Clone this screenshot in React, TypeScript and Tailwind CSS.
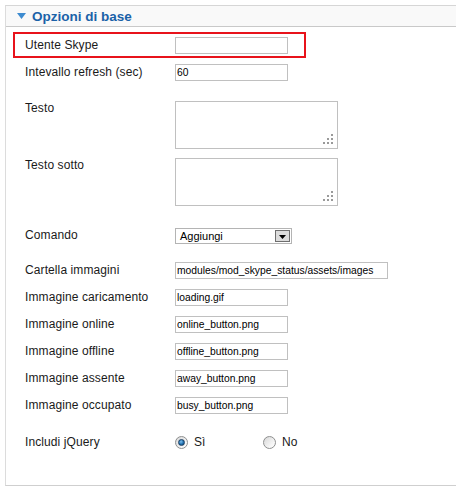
import React from "react";

type RowProps = { label: string; children: React.ReactNode; className?: string };

function Row({ label, children, className = "" }: RowProps) {
  return (
    <div className={`flex items-center pl-[19px] ${className}`}>
      <div className="w-[150px] shrink-0 text-[12px] leading-[17px] tracking-[0.1px] text-[#1a1a1a]">{label}</div>
      {children}
    </div>
  );
}

function TextField({ value = "", wide = false }: { value?: string; wide?: boolean }) {
  return (
    <input
      type="text"
      readOnly
      defaultValue={value}
      className={`${wide ? "w-[213px]" : "w-[113px]"} h-[17px] border border-[#c0c0c0] bg-white px-[1px] text-[10.3px] leading-[15px] text-black outline-none font-['Liberation_Sans',Arial,sans-serif]`}
    />
  );
}

function ResizeGrip() {
  // dotted corner grip of a resizable text area
  return (
    <svg className="absolute right-[4px] bottom-[4px]" width="11" height="11" viewBox="0 0 11 11">
      <g fill="#9a9a9a">
        <rect x="9" y="1" width="2" height="2" />
        <rect x="5" y="5" width="2" height="2" />
        <rect x="9" y="5" width="2" height="2" />
        <rect x="1" y="9" width="2" height="2" />
        <rect x="5" y="9" width="2" height="2" />
        <rect x="9" y="9" width="2" height="2" />
      </g>
    </svg>
  );
}

function TextBox() {
  return (
    <div className="relative w-[163px] h-[48px] border border-[#c0c0c0] bg-white">
      <ResizeGrip />
    </div>
  );
}

function TextRow({ label, className = "" }: { label: string; className?: string }) {
  return (
    <div className={`flex items-start pl-[19px] ${className}`}>
      <div className="w-[150px] shrink-0 text-[12px] leading-[17px] tracking-[0.1px] text-[#1a1a1a] -mt-[1px]">{label}</div>
      <TextBox />
    </div>
  );
}

function Dropdown({ value }: { value: string }) {
  return (
    <div className="flex items-center w-[117px] h-[16px] border border-[#b4b4b4] bg-white">
      <span className="flex-1 pl-[4px] text-[11px] leading-[14px] text-black">{value}</span>
      <span className="mr-[1px] flex h-[12px] w-[15px] items-end justify-center border border-[#6e6e6e] bg-[#dcdcdc] pb-[2px]">
        <svg width="7" height="4" viewBox="0 0 7 4">
          <path d="M0 0H7L3.5 4Z" fill="#000" />
        </svg>
      </span>
    </div>
  );
}

function Radio({ checked }: { checked: boolean }) {
  return (
    <span className="flex h-[13px] w-[13px] items-center justify-center rounded-full border border-[#8e8f8f] bg-[linear-gradient(135deg,#d8d8d8,#f6f6f6_70%,#ffffff)]">
      {checked && (
        <span className="h-[7px] w-[7px] rounded-full border border-[#1b3f63] bg-[radial-gradient(circle_at_40%_35%,#7ec0ef,#1f6fae_55%,#0d3c66)]" />
      )}
    </span>
  );
}

export default function App() {
  return (
    <div className="min-h-[493px] bg-white pt-[5px] pl-[5px] font-['Liberation_Sans',Arial,sans-serif]">
      <div className="w-[451px] border-t border-b border-l border-t-[#d6d6d6] border-b-[#cfcfcf] border-l-[#dcdcdc] bg-white">
        <div className="flex h-[21px] items-center border-b border-[#c9c9c9] bg-[#f9f9f9] pl-[11px]">
          <svg width="9" height="6" viewBox="0 0 9 6" className="mr-[6px]">
            <path d="M0 0H9L4.5 6Z" fill="#3d8bd0" />
          </svg>
          <span className="text-[13.5px] font-bold leading-[17px] text-[#1b62a8]">Opzioni di base</span>
        </div>

        <div className="pb-[34px]">
          <div className="mt-[5px] ml-[7px] flex h-[26px] w-[293px] items-center border-2 border-[#e8131b] pl-[10px]">
            <div className="w-[150px] shrink-0 text-[12px] leading-[17px] tracking-[0.1px] text-[#1a1a1a]">Utente Skype</div>
            <TextField />
          </div>

          <Row label="Intevallo refresh (sec)" className="mt-[6px]">
            <TextField value="60" />
          </Row>

          <TextRow label="Testo" className="mt-[20px]" />
          <TextRow label="Testo sotto" className="mt-[9px]" />

          <Row label="Comando" className="mt-[21px]">
            <Dropdown value="Aggiungi" />
          </Row>

          <Row label="Cartella immagini" className="mt-[18px]">
            <TextField value="modules/mod_skype_status/assets/images" wide />
          </Row>
          <Row label="Immagine caricamento" className="mt-[10px]">
            <TextField value="loading.gif" />
          </Row>
          <Row label="Immagine online" className="mt-[10px]">
            <TextField value="online_button.png" />
          </Row>
          <Row label="Immagine offline" className="mt-[10px]">
            <TextField value="offline_button.png" />
          </Row>
          <Row label="Immagine assente" className="mt-[10px]">
            <TextField value="away_button.png" />
          </Row>
          <Row label="Immagine occupato" className="mt-[10px]">
            <TextField value="busy_button.png" />
          </Row>

          <Row label="Includi jQuery" className="mt-[20px]">
            <div className="flex items-center">
              <div className="flex w-[88px] items-center gap-[6px]">
                <Radio checked />
                <span className="text-[12px] leading-[17px] text-[#1a1a1a]">Sì</span>
              </div>
              <div className="flex items-center gap-[6px]">
                <Radio checked={false} />
                <span className="text-[12px] leading-[17px] text-[#1a1a1a]">No</span>
              </div>
            </div>
          </Row>
        </div>
      </div>
    </div>
  );
}
